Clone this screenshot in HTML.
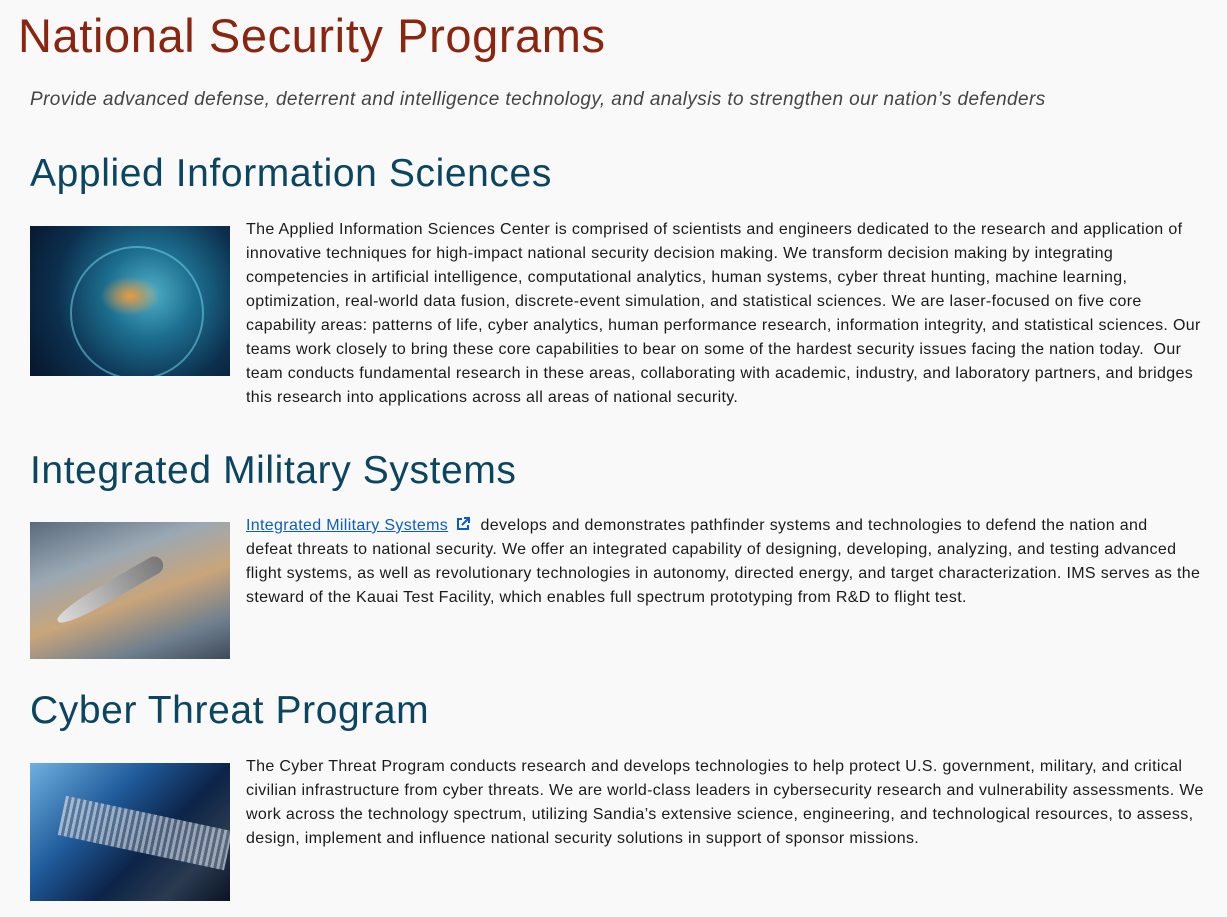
<!DOCTYPE html>
<html><head><meta charset="utf-8">
<style>
html,body{margin:0;padding:0;background:#f9f9f9;width:1227px;height:917px;overflow:hidden}
body{font-family:"Liberation Sans",sans-serif;color:#222;position:relative}
.t{position:absolute;white-space:nowrap}
h1{position:absolute;left:18px;top:6px;margin:0;font-weight:normal;font-size:47px;color:#8a2510;letter-spacing:0.6px;line-height:60px}
.sub{left:30px;top:87px;font-style:italic;font-size:19px;color:#444;letter-spacing:0.4px;line-height:26px}
h2{position:absolute;left:30px;margin:0;font-weight:normal;font-size:39px;color:#0b4560;letter-spacing:0.6px;line-height:50px}
.p{position:absolute;left:246px;font-size:16px;line-height:24px;color:#1a1a1a;white-space:nowrap;letter-spacing:0.34px}
.img{position:absolute;left:30px;width:200px;overflow:hidden}
a{color:#0b5cc4}
</style></head><body>
<h1>National Security Programs</h1>
<div class="t sub">Provide advanced defense, deterrent and intelligence technology, and analysis to strengthen our nation’s defenders</div>

<h2 style="top:149px">Applied Information Sciences</h2>
<div class="img" style="top:226px;height:150px;background:radial-gradient(circle at 60% 45%,#4fb0c8 0%,#1d6f90 30%,#0c2f4e 65%,#07152a 100%)">
<div style="position:absolute;left:40px;top:20px;width:130px;height:130px;border-radius:50%;border:2px solid rgba(120,220,240,.5)"></div>
<div style="position:absolute;left:70px;top:50px;width:60px;height:40px;background:radial-gradient(#e89a40,transparent 70%)"></div></div>
<div class="p" style="top:218px">The Applied Information Sciences Center is comprised of scientists and engineers dedicated to the research and application of<br>innovative techniques for high-impact national security decision making. We transform decision making by integrating<br>competencies in artificial intelligence, computational analytics, human systems, cyber threat hunting, machine learning,<br>optimization, real-world data fusion, discrete-event simulation, and statistical sciences. We are laser-focused on five core<br>capability areas: patterns of life, cyber analytics, human performance research, information integrity, and statistical sciences. Our<br>teams work closely to bring these core capabilities to bear on some of the hardest security issues facing the nation today.&nbsp; Our<br>team conducts fundamental research in these areas, collaborating with academic, industry, and laboratory partners, and bridges<br>this research into applications across all areas of national security.</div>

<h2 style="top:446px">Integrated Military Systems</h2>
<div class="img" style="top:522px;height:137px;background:linear-gradient(160deg,#5a6a7c 0%,#9aa8b4 30%,#c9a57a 55%,#6f7f8e 80%,#3e4a58 100%)">
<div style="position:absolute;left:20px;top:60px;width:120px;height:18px;background:linear-gradient(90deg,#ddd,#777);transform:rotate(-30deg);border-radius:50% 10px 10px 50%"></div></div>
<div class="p" style="top:514px"><a href="#">Integrated Military Systems</a> <svg width="16" height="16" viewBox="0 0 16 16" style="vertical-align:-2px;margin-left:2px"><path d="M7 3H3v10h10V9" fill="none" stroke="#0b5cc4" stroke-width="2"/><path d="M9 2h5v5M14 2L7 9" fill="none" stroke="#0b5cc4" stroke-width="2"/></svg>&nbsp; develops and demonstrates pathfinder systems and technologies to defend the nation and<br>defeat threats to national security. We offer an integrated capability of designing, developing, analyzing, and testing advanced<br>flight systems, as well as revolutionary technologies in autonomy, directed energy, and target characterization. IMS serves as the<br>steward of the Kauai Test Facility, which enables full spectrum prototyping from R&amp;D to flight test.</div>

<h2 style="top:686px">Cyber Threat Program</h2>
<div class="img" style="top:763px;height:138px;background:linear-gradient(135deg,#6fb0e0 0%,#1f5a9a 35%,#0c2448 60%,#2a3a50 80%,#0a1424 100%)">
<div style="position:absolute;left:30px;top:50px;width:170px;height:40px;background:repeating-linear-gradient(90deg,#cfd8e4 0 3px,#6a7a90 3px 6px);transform:rotate(12deg);opacity:.7"></div></div>
<div class="p" style="top:755px">The Cyber Threat Program conducts research and develops technologies to help protect U.S. government, military, and critical<br>civilian infrastructure from cyber threats. We are world-class leaders in cybersecurity research and vulnerability assessments. We<br>work across the technology spectrum, utilizing Sandia’s extensive science, engineering, and technological resources, to assess,<br>design, implement and influence national security solutions in support of sponsor missions.</div>
</body></html>
